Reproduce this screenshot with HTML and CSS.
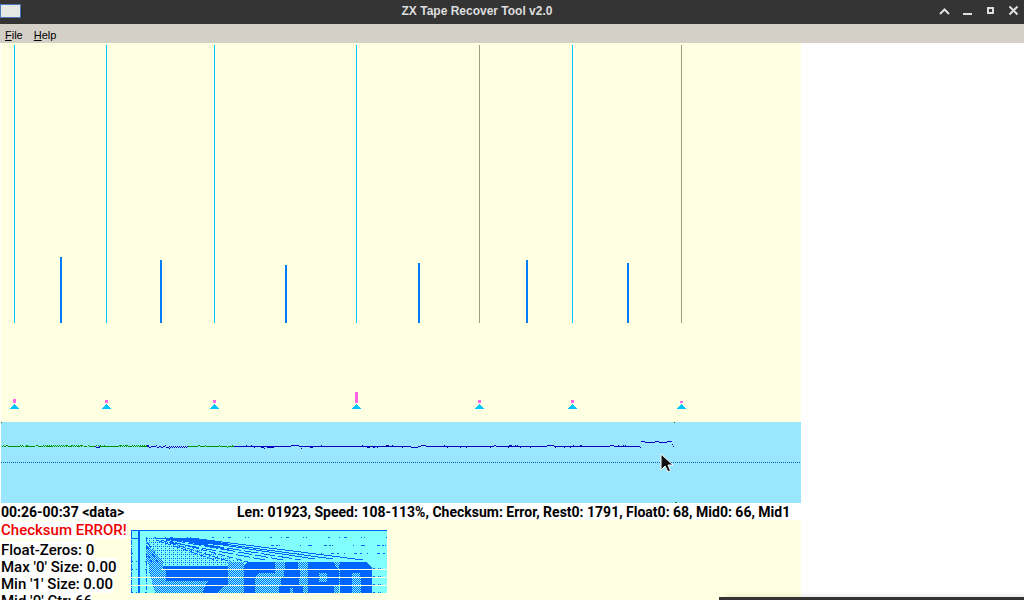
FILE: index.html
```
<!DOCTYPE html>
<html lang="en">
<head>
<meta charset="utf-8">
<title>ZX Tape Recover Tool v2.0</title>
<link rel="stylesheet" href="styles.css">
</head>
<body>
<header class="titlebar">
  <svg class="app-icon" width="22" height="18" viewBox="0 0 22 18" aria-hidden="true"><path d="M2 16h20V5" fill="none" stroke="#202226"/><rect x="0" y="3" width="21" height="14" fill="#4a78b8"/><rect x="1" y="4" width="19" height="12" fill="#e6e8e4"/></svg>
  <h1 class="title">ZX Tape Recover Tool v2.0</h1>
  <div class="window-buttons">
    <button type="button" aria-label="Shade"><svg viewBox="0 0 23 24"><path d="M8 14l4.500-4.500L17 14" fill="none" stroke="#dedede" stroke-width="2"/></svg></button>
    <button type="button" aria-label="Minimize"><svg viewBox="0 0 23 24"><path d="M8 13h9v2H8z" fill="#dedede"/></svg></button>
    <button type="button" aria-label="Maximize"><svg viewBox="0 0 23 24"><path d="M10 8h5v5h-5z" fill="none" stroke="#dedede" stroke-width="2"/></svg></button>
    <button type="button" aria-label="Close"><svg viewBox="0 0 23 24"><path d="M8.500 6.500l8 8M16.500 6.500l-8 8" fill="none" stroke="#dedede" stroke-width="2"/></svg></button>
  </div>
</header>
<nav class="menubar">
  <button type="button"><u>F</u>ile</button>
  <button type="button"><u>H</u>elp</button>
</nav>
<main class="workspace">
  <svg class="graph" viewBox="0 0 800 379" shape-rendering="crispEdges" role="img" aria-label="Pulse length histogram">
    <path d="M13 2h1v278h-1zM105 2h1v278h-1zM213 2h1v278h-1zM355 2h1v278h-1zM571 2h1v278h-1z" fill="#00c4ff"/>
    <path d="M478 2h1v278h-1zM680 2h1v278h-1z" fill="#a09a86"/>
    <path d="M59 214h2v66h-2zM159 217h2v63h-2zM284 222h2v58h-2zM417 220h2v60h-2zM525 217h2v63h-2zM626 220h2v60h-2z" fill="#007cf8"/>
    <path d="M12 356h3v4h-3zM104 357h3v3h-3zM212 357h3v3h-3zM354 349h3v11h-3zM477 357h3v3h-3zM570 357h3v3h-3zM679 358h3v2h-3z" fill="#ff64e6"/>
    <defs><path id="mark" d="M4 0h1v1h1v1h1v1h1v1h1v1H0V4h1V3h1V2h1V1h1z" fill="#00c4ff"/></defs>
    <use href="#mark" x="9" y="361"/><use href="#mark" x="101" y="361"/><use href="#mark" x="209" y="361"/><use href="#mark" x="351" y="361"/><use href="#mark" x="474" y="361"/><use href="#mark" x="567" y="361"/><use href="#mark" x="676" y="361"/>
  </svg>
  <div class="track">
    <svg class="graph" viewBox="0 0 800 81" shape-rendering="crispEdges" role="img" aria-label="Tape speed over time">
      <path d="M0 0h1v1H0zM673 0h1v1h-1zM674 80h2v1h-2z" fill="#008c00"/>
      <path d="M0 40.500h800" stroke="#0060d0" stroke-dasharray="1 1"/>
      <g fill="none" stroke="#009600">
        <path d="M1 24.500h1M3 24.500h2M7 24.500h12M20 24.500h1M22 24.500h1M24 24.500h10M37 24.500h5M46 24.500h5M67 24.500h3M76 24.500h3M83 24.500h3M88 24.500h6M99 24.500h19M127 24.500h4M139 24.500h7M187 24.500h10M199 24.500h5M205 24.500h13M219 24.500h7M227 24.500h6"/>
        <path d="M2 23.500h1M5 23.500h2M19 23.500h1M21 23.500h1M25 23.500h2M35 23.500h2M64 23.500h3M70 23.500h2M80 23.500h1M87 23.500h1M103 23.500h1M118 23.500h2M125 23.500h2M197 23.500h2M204 23.500h1M218 23.500h1M231 23.500h1"/>
        <path d="M42 23.500h25M71 23.500h12M95 23.500h5M120 23.500h7M131 23.500h15" stroke-dasharray="1 1"/>
        <path d="M43 24.500h24M70 24.500h12M119 24.500h7M132 24.500h14" stroke-dasharray="1 1"/>
        <path d="M226 25.500h1"/>
      </g>
      <g fill="none" stroke="#0000b8">
        <path d="M94 24.500h1M98 24.500h1M146 24.500h2M150 24.500h5M158 24.500h2M162 24.500h2M233 24.500h57M298 24.500h112M417 24.500h3M425 24.500h68M495 24.500h51M553 24.500h56M613 24.500h26"/>
        <path d="M146 23.500h2M155 23.500h1M164 23.500h1M245 23.500h1M250 23.500h1M290 23.500h8M320 23.500h1M361 23.500h1M385 23.500h3M391 23.500h1M420 23.500h5M443 23.500h1M493 23.500h2M508 23.500h3M514 23.500h1M516 23.500h1M546 23.500h7M572 23.500h1M579 23.500h2M609 23.500h4M617 23.500h1M622 23.500h1M624 23.500h1"/>
        <path d="M95 25.500h4M148 25.500h2M156 25.500h2M160 25.500h2M165 25.500h3M253 25.500h1M260 25.500h3M266 25.500h7M309 25.500h3M366 25.500h3M372 25.500h2M376 25.500h1M401 25.500h1M410 25.500h7M446 25.500h1M459 25.500h1M465 25.500h1M489 25.500h1M507 25.500h1M519 25.500h1M529 25.500h1M554 25.500h1M563 25.500h1M569 25.500h1M639 25.500h1M672 24.500h1M671 22.500h1"/>
        <path d="M168 24.500h19M169 25.500h17" stroke-dasharray="1 1"/>
        <path d="M168 26.500h1M263 26.500h1M300 26.500h1"/>
        <path d="M640 19.500h4M654 19.500h4M666 19.500h5M644 20.500h10M658 20.500h8"/>
      </g>
    </svg>
    <svg class="pointer" viewBox="0 0 14 20" aria-hidden="true"><path d="M1 1v16l4-4 3 6 2.500-1.500L8 12h5z" fill="#111" stroke="#fff"/></svg>
  </div>
  <div class="status">
    <span class="range">00:26-00:37 &lt;data&gt;</span>
    <span class="details">Len: 01923, Speed: 108-113%, Checksum: Error, Rest0: 1791, Float0: 68, Mid0: 66, Mid1</span>
  </div>
  <section class="results">
    <div class="stats">
      <p class="error"><span>Checksum ERROR!</span></p>
      <p><span>Float-Zeros: 0</span></p>
      <p><span>Max '0' Size: 0.00</span></p>
      <p><span>Min '1' Size: 0.00</span></p>
      <p><span>Mid '0' Ctr: 66</span></p>
    </div>
    <svg class="screen" viewBox="0 0 256 63" shape-rendering="crispEdges" role="img" aria-label="Recovered screen">
      <defs>
        <pattern id="check" width="2" height="2" patternUnits="userSpaceOnUse"><rect width="2" height="2" fill="#80ffff"/><path d="M0 0h1v1H0zM1 1h1v1H1z" fill="#0064ff"/></pattern>
        <pattern id="dots" width="4" height="4" patternUnits="userSpaceOnUse"><path d="M0 0h1v1H0zM2 2h1v1H2zM2 0h1v1H2z" fill="#0064ff"/></pattern>
      </defs>
      <rect width="256" height="63" fill="#80ffff"/>
      <path d="M0 0h256v1H0zM0 0h1v9H0zM7 0h2v63H7zM0 8h8v1H0z" fill="#0064ff"/>
      <path d="M15.500 7v54M.500 10v53" stroke="#0064ff" stroke-dasharray="5 1 1 1"/>
      <path d="M16 8h9l88 24v5H36L16 15z" fill="url(#dots)"/>
      <path d="M16 14l16 18v7H20l-4-8z" fill="url(#check)"/>
      <path d="M20 8h40l40 6-10 1-16-1 30 7-29-5-25-5-10-1z" fill="#0064ff"/>
      <g fill="none" stroke="#0064ff">
        <path d="M60 8l172 22M56 9l146 20M52 9l132 20"/>
        <path d="M46 10l124 20M40 10l112 20M38 12l96 18" stroke-dasharray="14 3"/>
        <path d="M35 10l82 22M30 10l70 22M25 10l62 21" stroke-dasharray="7 2"/>
        <path d="M16 12l8 11M16 17l12 16M17 26l8 13" stroke-dasharray="3 1"/>
        <path d="M23 7.500h233" stroke-dasharray="2 9 1 4 3 14 1 2 1 21"/>
        <path d="M140 15.500h116" stroke-dasharray="3 2 2 1 1 20 1 7 4 12"/>
        <path d="M0 23.500h15M160 23.500h96" stroke-dasharray="2 5 1 9 3 3"/>
        <path d="M0 31.500h16M0 39.500h18M0 62.500h16M242 38.500h14M242 46.500h14M242 54.500h14M242 62.500h14" stroke-dasharray="2 3 1 1 1 6"/>
      </g>
      <path d="M18 32h14v7h3v24H24l-6-22z" fill="url(#check)"/>
      <path d="M32 36h66v3H32zM35 40h206v7H35zM35 48h206v7H35zM72 56h169v7H72zM117 32h119l5 6v1H113v-4z" fill="#0064ff"/>
      <g fill="url(#check)">
        <path d="M97 32h16v7H97zM97 40h16v7H97zM144 32h10v7h-10zM167 32h10v7h-10zM203 32h6l-1 7h-2z"/>
        <path d="M127 43h22v4h-24zM144 40h9v7h-9zM169 40h8v7h-8zM188 43h8v4h-8zM221 43h8v4h-8z"/>
        <path d="M35 51h42l-6 12H30l4-7h1zM97 48h16v7H97zM124 48h26v7h-26zM168 48h9v7h-9zM188 48h8v4h-8zM221 48h9v7h-9z"/>
        <path d="M92 56h21v7H86zM124 56h24v7h-24zM159 58h3v5h-3zM172 56h5v7h-5zM203 56h6v7h-6zM221 56h9v7h-9z"/>
      </g>
      <path d="M208.500 40v23" stroke="#80ffff" stroke-dasharray="1 1"/>
      <path d="M30 39h226v1H30zM0 47h256v1H0zM0 55h256v1H0z" fill="#ffffe1"/>
    </svg>
  </section>
</main>
<div class="other-window" aria-hidden="true"></div>
</body>
</html>
```
FILE: styles.css
```
* { box-sizing: border-box; }
body {
  margin: 0;
  height: 100vh;
  overflow: hidden;
  display: flex;
  flex-direction: column;
  background: #fff;
  color: #000;
  font-family: "Liberation Sans", Arial, sans-serif;
}
button { border: 0; padding: 0; background: none; color: inherit; font: inherit; }
svg { display: block; }
p, h1 { margin: 0; }

.titlebar {
  flex: none;
  display: flex;
  align-items: center;
  height: 24px;
  background: #343434;
  color: #dedede;
}
.app-icon { flex: none; margin-bottom: 4px; }
.title {
  flex: 1;
  padding-bottom: 2px;
  text-align: center;
  font-size: 12px;
  font-weight: bold;
  line-height: 20px;
}
.window-buttons { display: flex; }
.window-buttons button, .window-buttons svg { width: 23px; height: 24px; }

.menubar {
  flex: none;
  display: flex;
  gap: 11px;
  height: 19px;
  padding: 3px 5px 0;
  background: #d4d0c8;
  font-size: 11px;
  line-height: 16px;
}

.workspace {
  flex: 1;
  min-height: 0;
  display: flex;
  flex-direction: column;
  width: 100%;
  max-width: 801px;
  padding-left: 1px;
}
.workspace > * { flex: none; background: #ffffe1; }
.graph { width: 100%; height: auto; }
.workspace > .track { position: relative; background: #9be6ff; }
.pointer {
  position: absolute;
  left: 82%;
  top: 31px;
  margin-left: 3px;
  width: 14px;
  height: 20px;
}

.workspace > .status { background: #fff; }
.status {
  display: flex;
  height: 17px;
  overflow: hidden;
  white-space: nowrap;
  font: 700 14px/18px Roboto, sans-serif;
}
.range { flex: none; width: 236px; }
.workspace > .results { flex: 1; min-height: 0; overflow: hidden; }
.results { display: flex; align-items: flex-start; }
.stats {
  width: 130px;
  white-space: nowrap;
  font: 500 15px/17px Roboto, sans-serif;
}
.stats span { background: #fff; }
.error { padding: 2px 0 3px; color: #f00000; }
.screen { width: 256px; height: 63px; margin-top: 10px; }

.other-window {
  position: absolute;
  right: 0;
  bottom: 0;
  width: 305px;
  height: 3px;
  background: #343434;
  box-shadow: 6px -1px 5px rgba(0, 0, 0, 0.15);
}
```
